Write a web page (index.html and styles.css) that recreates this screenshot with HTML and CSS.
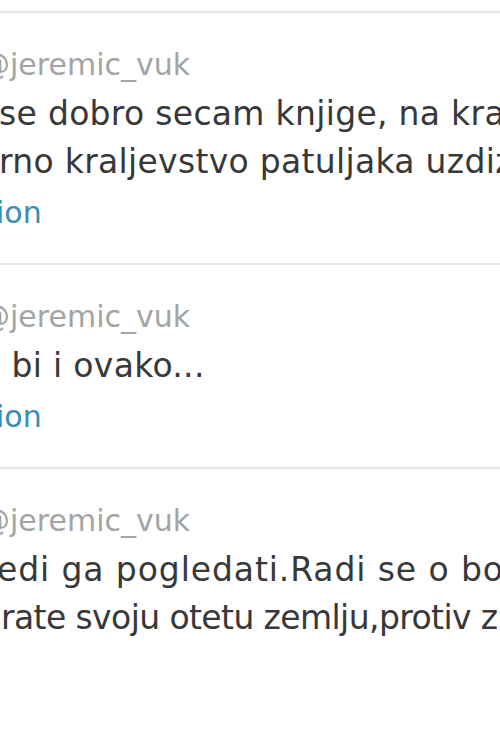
FILE: index.html
```html
<!DOCTYPE html>
<html lang="sr">
<head>
<meta charset="utf-8">
<title>Tweets</title>
<link rel="stylesheet" href="styles.css">
</head>
<body>
<div class="feed">
  <div class="tweet">
    <div class="handle">@jeremic_vuk</div>
    <p class="text">
      <span class="line">se dobro secam knjige, na kraju</span>
      <span class="line">rno kraljevstvo patuljaka uzdize se</span>
    </p>
    <a class="link">ion</a>
  </div>
  <div class="tweet">
    <div class="handle">@jeremic_vuk</div>
    <p class="text">
      <span class="line line-short">, bi i ovako...</span>
    </p>
    <a class="link">ion</a>
  </div>
  <div class="tweet">
    <div class="handle">@jeremic_vuk</div>
    <p class="text">
      <span class="line line-wide">edi ga pogledati.Radi se o borbi</span>
      <span class="line line-tight">rate svoju otetu zemlju,protiv zmaja</span>
    </p>
  </div>
</div>
</body>
</html>
```

FILE: styles.css
```css
html, body {
  margin: 0;
  padding: 0;
  background: #ffffff;
}

body {
  font-family: "DejaVu Sans", "Liberation Sans", sans-serif;
  overflow: hidden;
}

.feed {
  padding-top: 11px;
  width: 500px;
  overflow: hidden;
}

.tweet {
  border-top: 2px solid #e6e6e6;
  padding: 34px 0 32px 0;
  display: flex;
  flex-direction: column;
}

.handle {
  font-size: 30px;
  line-height: 36px;
  color: #a4a4a4;
  margin-left: -20px;
  white-space: nowrap;
}

.text {
  margin: 7px 0 0 0;
  font-size: 33px;
  line-height: 48px;
  letter-spacing: 0.3px;
  color: #383838;
  display: flex;
  flex-direction: column;
}

.line {
  display: block;
  white-space: nowrap;
  margin-left: -1px;
}

.line-short {
  margin-left: -10px;
}

.line-wide {
  margin-left: -3px;
  letter-spacing: 0.9px;
}

.line-tight {
  letter-spacing: -0.6px;
  margin-left: 1px;
}

.link {
  margin-top: 9px;
  font-size: 30px;
  line-height: 36px;
  color: #3b8db2;
  margin-left: -4px;
  white-space: nowrap;
}
```
